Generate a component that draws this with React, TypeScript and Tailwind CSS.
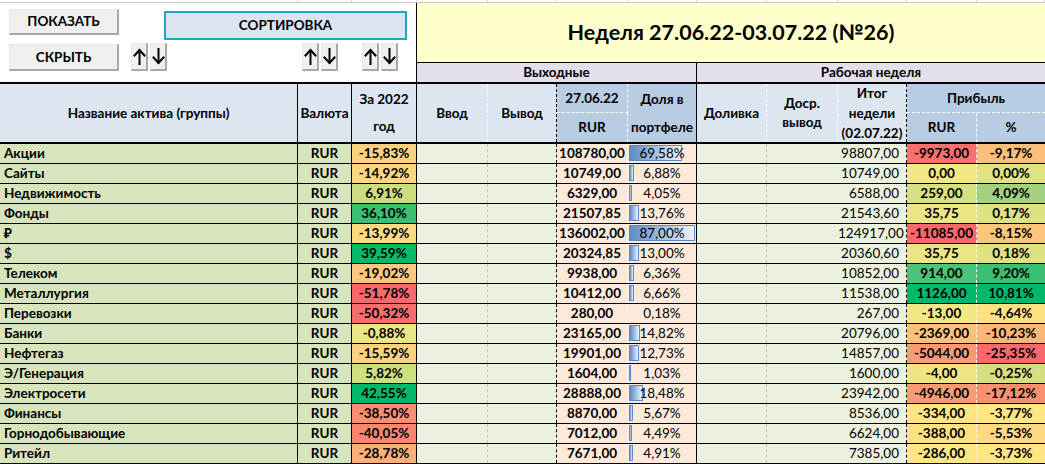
import React from "react";

type Row = {
  n: string;
  y: string;
  yc: string;
  v: string;
  d: number;
  ds: string;
  t: string;
  p: string;
  pc: string;
  pp: string;
  ppc: string;
};

const rows: Row[] = [
  { n: "Акции", y: "-15,83%", yc: "bg-[#fdd17f]", v: "108780,00", d: 69.58, ds: "69,58%", t: "98807,00", p: "-9973,00", pc: "bg-[#f8716c]", pp: "-9,17%", ppc: "bg-[#fcbf7b]" },
  { n: "Сайты", y: "-14,92%", yc: "bg-[#fed680]", v: "10749,00", d: 6.88, ds: "6,88%", t: "10749,00", p: "0,00", pc: "bg-[#f1e783]", pp: "0,00%", ppc: "bg-[#e1e383]" },
  { n: "Недвижимость", y: "6,91%", yc: "bg-[#cadd81]", v: "6329,00", d: 4.05, ds: "4,05%", t: "6588,00", p: "259,00", pc: "bg-[#d6e182]", pp: "4,09%", ppc: "bg-[#a2d27f]" },
  { n: "Фонды", y: "36,10%", yc: "bg-[#3cbf73]", v: "21507,85", d: 13.76, ds: "13,76%", t: "21543,60", p: "35,75", pc: "bg-[#ebe583]", pp: "0,17%", ppc: "bg-[#dfe283]" },
  { n: "₽", y: "-13,99%", yc: "bg-[#fed980]", v: "136002,00", d: 87.0, ds: "87,00%", t: "124917,00", p: "-11085,00", pc: "bg-[#f8696b]", pp: "-8,15%", ppc: "bg-[#fcc67c]" },
  { n: "$", y: "39,59%", yc: "bg-[#05b86a]", v: "20324,85", d: 13.0, ds: "13,00%", t: "20360,60", p: "35,75", pc: "bg-[#ebe583]", pp: "0,18%", ppc: "bg-[#dee283]" },
  { n: "Телеком", y: "-19,02%", yc: "bg-[#fdc87d]", v: "9938,00", d: 6.36, ds: "6,36%", t: "10852,00", p: "914,00", pc: "bg-[#4bc479]", pp: "9,20%", ppc: "bg-[#3abf73]" },
  { n: "Металлургия", y: "-51,78%", yc: "bg-[#f8696b]", v: "10412,00", d: 6.66, ds: "6,66%", t: "11538,00", p: "1126,00", pc: "bg-[#00b86a]", pp: "10,81%", ppc: "bg-[#00b86a]" },
  { n: "Перевозки", y: "-50,32%", yc: "bg-[#f86e6c]", v: "280,00", d: 0.18, ds: "0,18%", t: "267,00", p: "-13,00", pc: "bg-[#f3e783]", pp: "-4,64%", ppc: "bg-[#fee182]" },
  { n: "Банки", y: "-0,88%", yc: "bg-[#ebe583]", v: "23165,00", d: 14.82, ds: "14,82%", t: "20796,00", p: "-2369,00", pc: "bg-[#fcc27c]", pp: "-10,23%", ppc: "bg-[#fbb67a]" },
  { n: "Нефтегаз", y: "-15,59%", yc: "bg-[#fed17f]", v: "19901,00", d: 12.73, ds: "12,73%", t: "14857,00", p: "-5044,00", pc: "bg-[#fa9a74]", pp: "-25,35%", ppc: "bg-[#f8696b]" },
  { n: "Э/Генерация", y: "5,82%", yc: "bg-[#cedf81]", v: "1604,00", d: 1.03, ds: "1,03%", t: "1600,00", p: "-4,00", pc: "bg-[#efe683]", pp: "-0,25%", ppc: "bg-[#d5df81]" },
  { n: "Электросети", y: "42,55%", yc: "bg-[#00b86a]", v: "28888,00", d: 18.48, ds: "18,48%", t: "23942,00", p: "-4946,00", pc: "bg-[#fa9b74]", pp: "-17,12%", ppc: "bg-[#f99070]" },
  { n: "Финансы", y: "-38,50%", yc: "bg-[#fa8f72]", v: "8870,00", d: 5.67, ds: "5,67%", t: "8536,00", p: "-334,00", pc: "bg-[#fee483]", pp: "-3,77%", ppc: "bg-[#fee683]" },
  { n: "Горнодобывающие", y: "-40,05%", yc: "bg-[#f98770]", v: "7012,00", d: 4.49, ds: "4,49%", t: "6624,00", p: "-388,00", pc: "bg-[#fee282]", pp: "-5,53%", ppc: "bg-[#fed981]" },
  { n: "Ритейл", y: "-28,78%", yc: "bg-[#fbaf79]", v: "7671,00", d: 4.91, ds: "4,91%", t: "7385,00", p: "-286,00", pc: "bg-[#fee683]", pp: "-3,73%", ppc: "bg-[#fee683]" },
];

const COLS =
  "grid grid-cols-[298px_54px_65px_71px_69px_71px_69px_70px_71px_69px_70px_68px]";

function FormButton({ label, w, h }: { label: string; w: string; h: string }) {
  return (
    <div
      className={`${w} ${h} flex items-center justify-center bg-[#f0f0f0] border-t border-l border-[#e8e8e8] border-r-2 border-b-2 border-r-[#a8a8a8] border-b-[#a8a8a8] text-[13.5px] font-bold text-black`}
    >
      {label}
    </div>
  );
}

function ArrowBtn({ up }: { up: boolean }) {
  return (
    <div className="w-[17px] h-[28px] flex items-center justify-center bg-[#f0f0f0] border-t border-l border-[#e8e8e8] border-r-2 border-b-2 border-r-[#a8a8a8] border-b-[#a8a8a8]">
      <svg width="13" height="17" viewBox="0 0 13 17" fill="none" stroke="#000" strokeWidth="2" strokeLinecap="square">
        {up ? (
          <>
            <path d="M6.5 2.5 V16" />
            <path d="M1.5 7.5 L6.5 2 L11.5 7.5" strokeLinejoin="miter" />
          </>
        ) : (
          <>
            <path d="M6.5 1 V14.5" />
            <path d="M1.5 9.5 L6.5 15 L11.5 9.5" strokeLinejoin="miter" />
          </>
        )}
      </svg>
    </div>
  );
}

function ArrowPair() {
  return (
    <div className="flex gap-[2px]">
      <ArrowBtn up />
      <ArrowBtn up={false} />
    </div>
  );
}

function DataRow({ r }: { r: Row }) {
  const barW = Math.round((r.d / 87) * 66);
  return (
    <div className={`${COLS} h-[20px] border-b border-black text-[13.5px] font-bold leading-[19px] text-black`}>
      <div className="bg-[#d8e4bc] border-r border-black pl-[4px] whitespace-nowrap">{r.n}</div>
      <div className="bg-[#d8e4bc] border-r border-black text-center">RUR</div>
      <div className={`${r.yc} border-r border-black text-center`}>{r.y}</div>
      <div className="bg-[#ebf1de] border-r border-dashed border-r-[#c4c4c4]" />
      <div className="bg-[#ebf1de] border-r border-dashed border-r-black" />
      <div className="bg-[#fde9d9] border-r border-dashed border-r-[#f7f7f7] text-center whitespace-nowrap">{r.v}</div>
      <div className="relative bg-[#fde9d9] border-r border-black text-center font-normal">
        {barW >= 1 && (
          <div
            className="absolute left-[1px] top-[1px] bottom-[2px] border border-[#5b8bc8] bg-gradient-to-r from-[#5b8bc8] to-[#eef3fa]"
            style={{ width: `${barW}px` }}
          />
        )}
        <span className="relative">{r.ds}</span>
      </div>
      <div className="bg-[#ebf1de] border-r border-dashed border-r-[#c4c4c4]" />
      <div className="bg-[#ebf1de]" />
      <div className="bg-[#ebf1de] border-r border-dashed border-r-black text-right pr-[7px] font-normal whitespace-nowrap">{r.t}</div>
      <div className={`${r.pc} border-r border-dashed border-r-[#f7f7f7] text-center whitespace-nowrap`}>{r.p}</div>
      <div className={`${r.ppc} text-center`}>{r.pp}</div>
    </div>
  );
}

export default function App() {
  return (
    <div className="w-[1045px] h-[464px] overflow-hidden bg-white font-['Lato','Open_Sans',sans-serif] text-black">
      {/* top grid strip */}
      <div className={`${COLS} h-[3px] border-b border-[#c8c8c8]`}>
        {Array.from({ length: 12 }).map((_, i) => (
          <div key={i} className="border-r border-[#d6d6d6]" />
        ))}
      </div>

      {/* control + title area */}
      <div className="flex h-[79px]">
        <div className="w-[417px] border-r border-black bg-white flex flex-col">
          <div className="flex h-[40px] items-start">
            <div className="ml-[9px] mt-[6px]">
              <FormButton label="ПОКАЗАТЬ" w="w-[110px]" h="h-[26px]" />
            </div>
            <div className="ml-[45px] mt-[8px] w-[243px] h-[29px] flex items-center justify-center bg-[#dbe5f1] border-2 border-[#1ea5c4] text-[13.5px] font-bold">
              СОРТИРОВКА
            </div>
          </div>
          <div className="flex items-start">
            <div className="ml-[9px] mt-[1px]">
              <FormButton label="СКРЫТЬ" w="w-[110px]" h="h-[27px]" />
            </div>
            <div className="ml-[12px]">
              <ArrowPair />
            </div>
            <div className="ml-[135px]">
              <ArrowPair />
            </div>
            <div className="ml-[24px]">
              <ArrowPair />
            </div>
          </div>
        </div>
        <div className="w-[628px] flex flex-col">
          <div className="h-[60px] bg-[#ffffcc] border-b border-black flex items-center justify-center text-[21.5px] font-bold">
            Неделя 27.06.22-03.07.22 (№26)
          </div>
          <div className="h-[19px] flex bg-[#e4dfec] text-[13.5px] font-bold leading-[19px]">
            <div className="w-[280px] border-r border-black text-center">Выходные</div>
            <div className="flex-1 text-center">Рабочая неделя</div>
          </div>
        </div>
      </div>

      <div className="h-[2px] bg-black" />

      {/* header */}
      <div className={`${COLS} grid-rows-[29px_29px] h-[58px] text-[13.5px] font-bold text-black`}>
        <div className="row-span-2 bg-[#dce6f1] border-r border-black flex items-center justify-center">
          Название актива (группы)
        </div>
        <div className="row-span-2 bg-[#dce6f1] border-r border-black flex items-center justify-center">
          Валюта
        </div>
        <div className="row-span-2 bg-[#dce6f1] border-r border-black flex items-center justify-center text-center leading-[27px]">
          За 2022
          <br />
          год
        </div>
        <div className="row-span-2 bg-[#dce6f1] border-r border-dashed border-r-white flex items-center justify-center">
          Ввод
        </div>
        <div className="row-span-2 bg-[#dce6f1] border-r border-dashed border-r-black flex items-center justify-center">
          Вывод
        </div>
        <div className="bg-[#b8cce4] border-r border-b border-dashed border-r-white border-b-white flex items-center justify-center">
          27.06.22
        </div>
        <div className="row-span-2 bg-[#b8cce4] border-r border-black flex items-center justify-center text-center leading-[28px]">
          Доля в
          <br />
          портфеле
        </div>
        <div className="row-span-2 bg-[#dce6f1] border-r border-dashed border-r-white flex items-center justify-center">
          Доливка
        </div>
        <div className="row-span-2 bg-[#dce6f1] border-r border-dashed border-r-white flex items-center justify-center text-center leading-[19px]">
          Доср.
          <br />
          вывод
        </div>
        <div className="row-span-2 bg-[#dce6f1] border-r border-dashed border-r-black flex items-center justify-center text-center leading-[20px]">
          Итог
          <br />
          недели
          <br />
          (02.07.22)
        </div>
        <div className="col-span-2 bg-[#b8cce4] border-b border-dashed border-b-white flex items-center justify-center">
          Прибыль
        </div>
        <div className="col-start-6 row-start-2 bg-[#b8cce4] border-r border-dashed border-r-white flex items-center justify-center">
          RUR
        </div>
        <div className="col-start-11 row-start-2 bg-[#b8cce4] border-r border-dashed border-r-white flex items-center justify-center">
          RUR
        </div>
        <div className="col-start-12 row-start-2 bg-[#b8cce4] flex items-center justify-center">
          %
        </div>
      </div>

      <div className="h-[2px] bg-black" />

      {rows.map((r) => (
        <DataRow key={r.n} r={r} />
      ))}
    </div>
  );
}
